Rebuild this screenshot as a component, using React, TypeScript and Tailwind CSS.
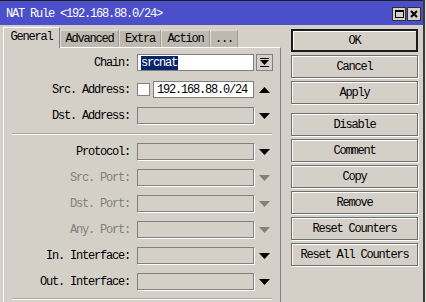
import React from "react";

type Row = {
  label: string;
  disabled?: boolean;
  arrow: "down" | "up" | "combo";
  mt: string;
};

const rowsTop: Row[] = [
  { label: "Chain:", arrow: "combo", mt: "mt-[6px]" },
  { label: "Src. Address:", arrow: "up", mt: "mt-[10px]" },
  { label: "Dst. Address:", arrow: "down", mt: "mt-[9px]" },
];

const rowsBottom: Row[] = [
  { label: "Protocol:", arrow: "down", mt: "mt-[8px]" },
  { label: "Src. Port:", arrow: "down", disabled: true, mt: "mt-[9px]" },
  { label: "Dst. Port:", arrow: "down", disabled: true, mt: "mt-[9px]" },
  { label: "Any. Port:", arrow: "down", disabled: true, mt: "mt-[9px]" },
  { label: "In. Interface:", arrow: "down", mt: "mt-[9px]" },
  { label: "Out. Interface:", arrow: "down", mt: "mt-[9px]" },
];

const tabs = [
  { name: "General", w: "w-[57px]" },
  { name: "Advanced", w: "w-[59px]" },
  { name: "Extra", w: "w-[42px]" },
  { name: "Action", w: "w-[49px]" },
  { name: "...", w: "w-[28px]" },
];

const buttons = [
  { name: "OK", mt: "mt-0", primary: true },
  { name: "Cancel", mt: "mt-[3px]" },
  { name: "Apply", mt: "mt-[3px]" },
  { name: "Disable", mt: "mt-[9px]" },
  { name: "Comment", mt: "mt-[3px]" },
  { name: "Copy", mt: "mt-[3px]" },
  { name: "Remove", mt: "mt-[3px]" },
  { name: "Reset Counters", mt: "mt-[3px]" },
  { name: "Reset All Counters", mt: "mt-[3px]" },
];

function Triangle({ up, color }: { up?: boolean; color: string }) {
  return (
    <svg width="11" height="6" viewBox="0 0 11 6">
      <polygon points={up ? "0,6 11,6 5.5,0" : "0,0 11,0 5.5,6"} fill={color} />
    </svg>
  );
}

function ComboIcon() {
  return (
    <svg width="9" height="9" viewBox="0 0 9 9">
      <rect x="0" y="0" width="9" height="1" fill="#000" />
      <polygon points="0,2 9,2 4.5,7" fill="#000" />
      <rect x="0" y="8" width="9" height="1" fill="#000" />
    </svg>
  );
}

function FieldRow({ row }: { row: Row }) {
  const labelColor = row.disabled ? "text-[#808080]" : "text-black";
  return (
    <div className={`flex items-center h-[17px] ${row.mt}`}>
      <div className={`w-[126px] text-right whitespace-nowrap ${labelColor}`}>{row.label}</div>
      <div className="ml-[7px] w-[117px] h-[17px] flex">
        {row.label === "Chain:" && (
          <div className="w-full h-full bg-white border border-[#808080] flex items-center pl-[3px]">
            <span className="bg-[#0a246a] text-white h-[14px] leading-[14px] pr-[1px]">srcnat</span>
          </div>
        )}
        {row.label === "Src. Address:" && (
          <div className="w-full h-full flex items-center">
            <div className="w-[13px] h-[13px] bg-white border border-[#808080]" />
            <div className="ml-[3px] flex-1 h-full bg-white border border-[#808080] flex items-center pl-[3px] text-black">
              192.168.88.0/24
            </div>
          </div>
        )}
        {row.label !== "Chain:" && row.label !== "Src. Address:" && (
          <div className="w-full h-full border border-[#808080] shadow-[1px_1px_0_#ffffff]" />
        )}
      </div>
      {row.arrow === "combo" ? (
        <div className="ml-[2px] w-[17px] h-[17px] border border-[#808080] flex items-center justify-center">
          <ComboIcon />
        </div>
      ) : (
        <div className="ml-[2px] w-[17px] flex items-center justify-center">
          <Triangle up={row.arrow === "up"} color={row.disabled ? "#808080" : "#000000"} />
        </div>
      )}
    </div>
  );
}

export default function App() {
  return (
    <div className="w-[426px] h-[302px] overflow-hidden bg-[#e8e6e0] font-['Liberation_Mono',monospace] text-[12px] tracking-[-1.2px] leading-none">
      <div className="w-[425px] h-full bg-[#d4d0c8] border-r-2 border-[#3a3a3a] flex flex-col">
        {/* title bar */}
        <div className="h-[25px] border-t border-[#202020] bg-[#4b4fc9] flex items-center pl-[6px] pr-[2px]">
          <span className="text-white pt-[2px]">NAT Rule &lt;192.168.88.0/24&gt;</span>
          <div className="ml-auto flex gap-[1px] pt-[2px]">
            <div className="w-[14px] h-[14px] bg-[#d4d0c8] border border-[#303030] flex items-center justify-center">
              <div className="w-[9px] h-[8px] border border-black border-t-2" />
            </div>
            <div className="w-[14px] h-[14px] bg-[#d4d0c8] border border-[#303030] flex items-center justify-center">
              <svg width="8" height="8" viewBox="0 0 8 8">
                <path d="M1 1 L7 7 M7 1 L1 7" stroke="#000" strokeWidth="2" />
              </svg>
            </div>
          </div>
        </div>

        <div className="flex flex-1">
          {/* tabs + panel */}
          <div className="w-[281px] pl-[3px] pt-[2px] flex flex-col">
            <div className="flex items-end h-[20px]">
              {tabs.map((t, i) =>
                i === 0 ? (
                  <div
                    key={t.name}
                    className={`${t.w} h-[21px] -mb-px relative z-10 bg-[#d4d0c8] border-t border-l border-white border-r border-r-[#808080] flex items-center justify-center pb-[2px] text-black`}
                  >
                    {t.name}
                  </div>
                ) : (
                  <div
                    key={t.name}
                    className={`${t.w} h-[17px] bg-[#bdb9b1] border-t border-l border-[#dedbd4] border-r border-r-[#a09c94] flex items-center justify-center text-black`}
                  >
                    {t.name}
                  </div>
                )
              )}
            </div>
            <div className="flex-1 border-t border-l border-white border-r border-r-[#808080] flex flex-col pl-0">
              {rowsTop.map((r) => (
                <FieldRow key={r.label} row={r} />
              ))}
              <div className="mt-[9px] ml-[8px] w-[260px] border-t border-[#a8a49c] border-b border-b-white" />
              {rowsBottom.map((r) => (
                <FieldRow key={r.label} row={r} />
              ))}
              <div className="mt-[8px] ml-[8px] w-[260px] border-t border-[#a8a49c] border-b border-b-white" />
            </div>
          </div>

          {/* buttons */}
          <div className="ml-[10px] w-[127px] pt-[4px] flex flex-col">
            {buttons.map((b) => (
              <div
                key={b.name}
                className={`${b.mt} h-[23px] flex items-center justify-center text-black whitespace-nowrap bg-[#d4d0c8] ${
                  b.primary
                    ? "border-2 border-[#1a1a1a] shadow-[inset_1px_1px_0_#ffffff]"
                    : "border border-[#6e6e6e] shadow-[inset_1px_1px_0_#ffffff,1px_1px_0_#ffffff]"
                }`}
              >
                {b.name}
              </div>
            ))}
          </div>
        </div>
      </div>
    </div>
  );
}
